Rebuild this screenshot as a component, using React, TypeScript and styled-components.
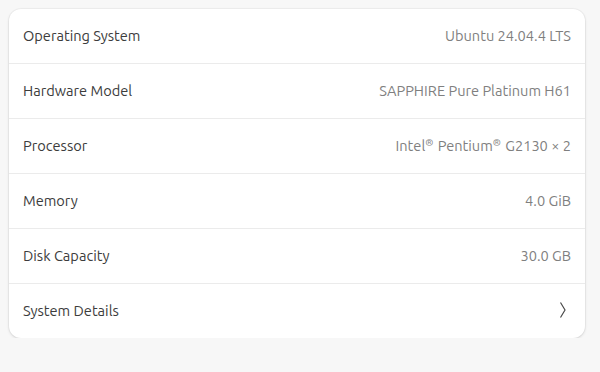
import React from "react";
import styled, { createGlobalStyle } from "styled-components";

const Global = createGlobalStyle`
  html, body { margin: 0; padding: 0; background: #f7f7f7; }
  body { font-family: "Ubuntu", "Noto Sans", "Open Sans", sans-serif; }
`;

const Page = styled.div`
  padding: 9px 15px 0 9px;
  width: 576px;
`;

const Card = styled.div`
  background: #ffffff;
  border-radius: 12px;
  box-shadow: 0 0 0 1px rgba(0, 0, 0, 0.03), 0 1px 3px rgba(0, 0, 0, 0.12);
  overflow: hidden;
`;

const Row = styled.div`
  display: flex;
  align-items: center;
  justify-content: space-between;
  height: 54px;
  padding: 0 14px 2px;
  box-sizing: border-box;
  & + & { border-top: 1px solid #ebebeb; height: 55px; }
`;

const Label = styled.span`
  font-size: 14.6px;
  color: #3c3c3c;
`;

const Value = styled.span`
  font-size: 14.6px;
  color: #7f7f7f;
`;

const Reg = styled.span`
  font-size: 0.68em;
  vertical-align: 0.45em;
  margin: 0 1px 0 0;
`;

const Chevron = () => (
  <svg width="8" height="16" viewBox="0 0 8 16" style={{ marginRight: 4 }}>
    <path d="M1.5 0.5 L6 8 L1.5 15.5" fill="none" stroke="#4a4a4a" strokeWidth="1.2" />
  </svg>
);

const rows: [string, React.ReactNode][] = [
  ["Operating System", "Ubuntu 24.04.4 LTS"],
  ["Hardware Model", "SAPPHIRE Pure Platinum H61"],
  [
    "Processor",
    <>
      Intel<Reg>®</Reg> Pentium<Reg>®</Reg> G2130 × 2
    </>,
  ],
  ["Memory", "4.0 GiB"],
  ["Disk Capacity", "30.0 GB"],
];

export default function App() {
  return (
    <>
      <Global />
      <Page>
        <Card>
          {rows.map(([l, v]) => (
            <Row key={l}>
              <Label>{l}</Label>
              <Value>{v}</Value>
            </Row>
          ))}
          <Row>
            <Label>System Details</Label>
            <Chevron />
          </Row>
        </Card>
      </Page>
    </>
  );
}
